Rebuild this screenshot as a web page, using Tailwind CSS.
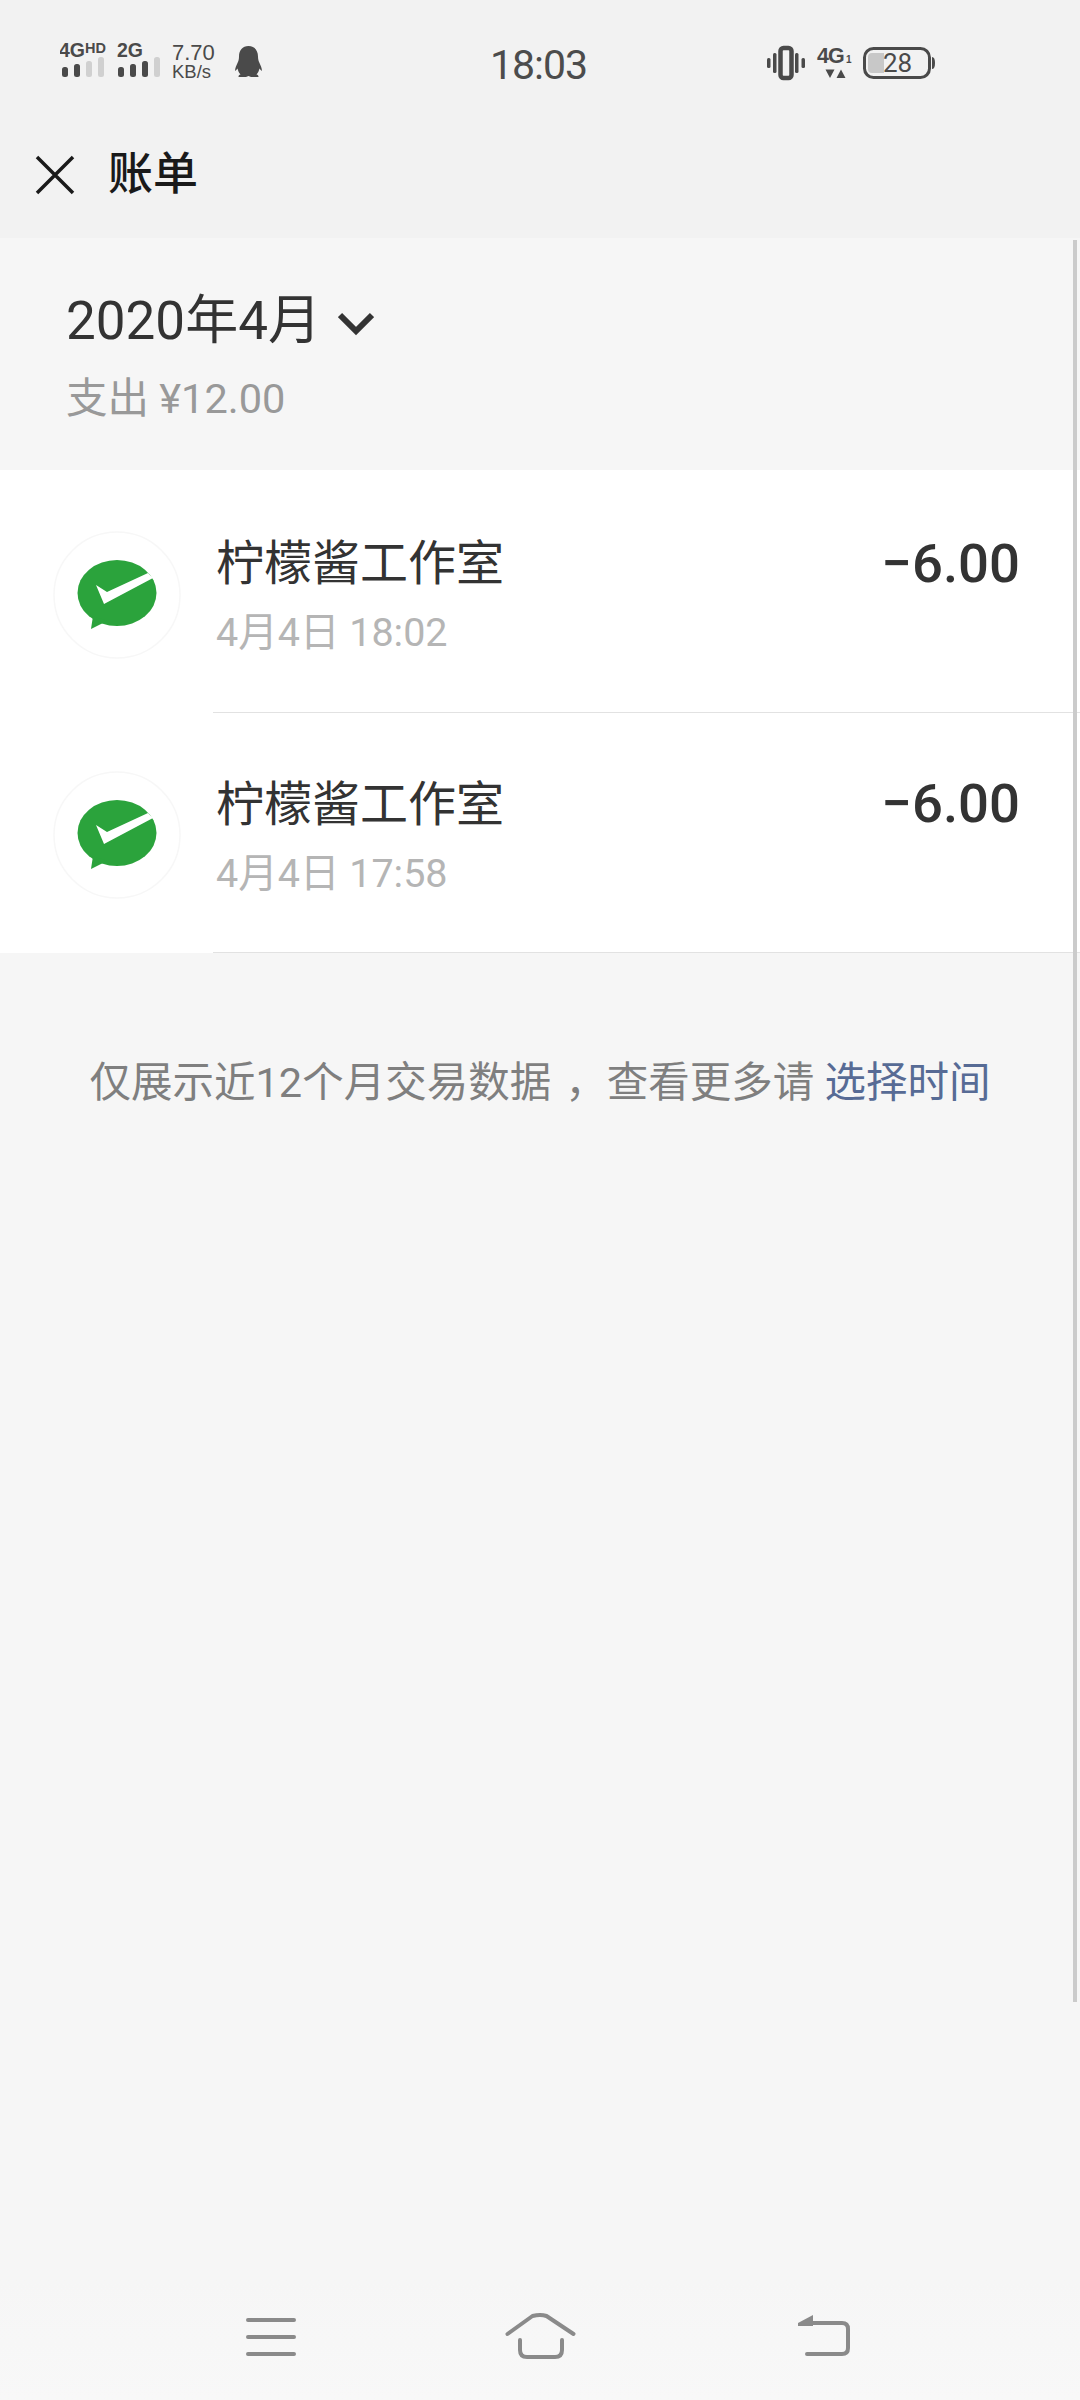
<!DOCTYPE html>
<html lang="zh-CN">
<head>
    <meta charset="UTF-8">
    <meta name="viewport" content="width=device-width, initial-scale=1.0">
    <title>账单</title>
    <script src="https://cdn.jsdelivr.net/npm/@tailwindcss/browser@4"></script>
</head>
<body class="relative flex flex-col w-[1080px] h-[2400px] overflow-hidden bg-[#f6f6f6] font-['Roboto','Noto_Sans_CJK_SC',sans-serif]">
    <!-- status bar + title -->
    <header class="h-[238px] bg-[#f2f2f2]">
        <div class="flex h-[128px]">
            <svg class="ml-[60px] shrink-0" width="205" height="128" viewBox="60 0 205 128">
                <g fill="#4a4a4a" font-family="Liberation Sans" font-weight="700">
                    <text x="59" y="57" font-size="19.500">4G</text>
                    <text x="85" y="52.500" font-size="14.500">HD</text>
                    <text x="117" y="57" font-size="19.500">2G</text>
                </g>
                <g fill="#4a4a4a">
                    <rect x="62" y="67" width="6" height="10" rx="2.500"/>
                    <rect x="74" y="64" width="6" height="13" rx="2.500"/>
                    <rect x="118" y="67" width="6" height="10" rx="2.500"/>
                    <rect x="130" y="64" width="6" height="13" rx="2.500"/>
                    <rect x="142" y="61" width="6" height="16" rx="2.500"/>
                </g>
                <g fill="#d0d0d0">
                    <rect x="86" y="61" width="6" height="16" rx="2.500"/>
                    <rect x="98" y="57" width="6" height="20" rx="2.500"/>
                    <rect x="154" y="57" width="6" height="20" rx="2.500"/>
                </g>
                <g fill="#4a4a4a" font-family="Liberation Sans">
                    <text x="172" y="60" font-size="22">7.70</text>
                    <text x="172" y="78" font-size="18.500">KB/s</text>
                </g>
                <path fill="#4a4a4a" d="M248.500 46c-6 0-9.500 4.500-9.500 10.500 0 2.500-.5 4.500-1.500 6.500-1.200 2.500-2.300 5-2.500 8 .9-.4 1.700-1.200 2.500-2.500.6 2.500 1.600 4.500 3 6-1.300.3-2 1-2 2.500h7.500l2.500-1 2.500 1h7.500c0-1.500-.7-2.200-2-2.500 1.400-1.500 2.400-3.500 3-6 .8 1.300 1.600 2.100 2.500 2.500-.2-3-1.300-5.500-2.500-8-1-2-1.500-4-1.500-6.500 0-6-3.500-10.500-9.500-10.500z"/>
            </svg>
            <div class="ml-[225px] w-[277px] shrink-0 pt-[40px] text-[41px] leading-[50px] tracking-[-1px] text-[#4c4c4c]">18:03</div>
            <svg class="shrink-0" width="170" height="128" viewBox="767 0 170 128">
                <g fill="#4a4a4a">
                    <rect x="767" y="58" width="3.500" height="10" rx="1.500"/>
                    <rect x="773" y="53" width="3.500" height="20" rx="1.500"/>
                    <rect x="795" y="53" width="3.500" height="20" rx="1.500"/>
                    <rect x="801.500" y="58" width="3.500" height="10" rx="1.500"/>
                </g>
                <rect x="780.500" y="48" width="11" height="30" rx="3" fill="none" stroke="#4a4a4a" stroke-width="4.500"/>
                <g fill="#4a4a4a" font-family="Liberation Sans" font-weight="700">
                    <text x="817" y="63" font-size="21.500" letter-spacing="-1">4G</text>
                    <text x="846" y="63" font-size="10">1</text>
                </g>
                <path fill="#4a4a4a" d="M825.500 69.500h9l-4.500 8.500zM836.500 78l4.500-8.500 4.500 8.500z"/>
                <rect x="864.500" y="48.500" width="65" height="29" rx="9" fill="none" stroke="#4a4a4a" stroke-width="3"/>
                <path fill="#c8c8c8" d="M872 53h12v20h-12a4 4 0 0 1-4-4v-12a4 4 0 0 1 4-4z"/>
                <path fill="#4a4a4a" d="M932 57c2 0 3 2 3 6s-1 6-3 6z"/>
                <text x="883" y="72" font-family="Roboto" font-size="26" fill="#4a4a4a">28</text>
            </svg>
        </div>
        <div class="flex items-center h-[90px] pt-[3px]">
            <svg class="ml-[34px] shrink-0" width="42" height="42" viewBox="0 0 42 42" fill="none" stroke="#1a1a1a" stroke-width="3.500">
                <path d="M3 3l36 36M39 3l-36 36"/>
            </svg>
            <div class="ml-[32px] text-[45px] leading-[60px] font-medium text-[#1a1a1a]">账单</div>
        </div>
    </header>

    <!-- month summary -->
    <section class="h-[232px] pl-[66px] pt-[53px]">
        <div class="flex items-center h-[60px]">
            <span class="text-[53px] leading-[60px] text-[#333333]">2020年4月</span>
            <svg class="ml-[17px] mt-[6px]" width="36" height="24" viewBox="0 0 36 24" fill="none" stroke="#333333" stroke-width="6">
                <path d="M2 3l16 16L34 3"/>
            </svg>
        </div>
        <div class="mt-[23px] text-[41.500px] leading-[50px] text-[#999999]">支出 ¥12.00</div>
    </section>

    <!-- bills -->
    <section class="bg-white pt-[3px]">
        <div class="flex h-[240px]">
            <div class="w-[213px] shrink-0 pl-[53px] pt-[58px]">
                <svg width="128" height="128" viewBox="53 531 128 128">
                    <circle cx="117" cy="595" r="63" fill="#ffffff" stroke="#f7f7f7" stroke-width="1.500"/>
                    <ellipse cx="117" cy="593" rx="39.500" ry="33" fill="#2ba33c"/>
                    <path fill="#2ba33c" d="M93 616l-2 13 16-8z"/>
                    <path fill="#ffffff" d="M96 585l11 7 41-19 5 5-49 26z"/>
                </svg>
            </div>
            <div class="flex flex-1 justify-between border-b border-[#e2e2e2] pr-[60px]">
                <div class="pl-[3px] pt-[61px]">
                    <div class="text-[48px] leading-[60px] text-[#333333]">柠檬酱工作室</div>
                    <div class="mt-[14px] text-[39.500px] leading-[50px] text-[#b5b5b5]">4月4日 18:02</div>
                </div>
                <div class="pt-[60px] text-[54.500px] leading-[60px] font-medium text-[#333333]">−6.00</div>
            </div>
        </div>
        <div class="flex h-[240px]">
            <div class="w-[213px] shrink-0 pl-[53px] pt-[58px]">
                <svg width="128" height="128" viewBox="53 531 128 128">
                    <circle cx="117" cy="595" r="63" fill="#ffffff" stroke="#f7f7f7" stroke-width="1.500"/>
                    <ellipse cx="117" cy="593" rx="39.500" ry="33" fill="#2ba33c"/>
                    <path fill="#2ba33c" d="M93 616l-2 13 16-8z"/>
                    <path fill="#ffffff" d="M96 585l11 7 41-19 5 5-49 26z"/>
                </svg>
            </div>
            <div class="flex flex-1 justify-between border-b border-[#e2e2e2] pr-[60px]">
                <div class="pl-[3px] pt-[62px]">
                    <div class="text-[48px] leading-[60px] text-[#333333]">柠檬酱工作室</div>
                    <div class="mt-[14px] text-[39.500px] leading-[50px] text-[#b5b5b5]">4月4日 17:58</div>
                </div>
                <div class="pt-[60px] text-[54.500px] leading-[60px] font-medium text-[#333333]">−6.00</div>
            </div>
        </div>
    </section>

    <p class="mt-[105px] text-center text-[41.500px] leading-[50px] text-[#7f7f7f]">仅展示近12个月交易数据<span class="ml-[14px]">，</span>查看更多请 <span class="text-[#576b95]">选择时间</span></p>

    <!-- nav bar -->
    <nav class="flex mt-auto h-[120px] bg-linear-to-b from-[#f6f6f6] to-[#f8f8f8]">
        <svg class="ml-[240px] shrink-0" width="60" height="120" viewBox="240 2280 60 120" fill="none" stroke="#8a8a8a" stroke-width="4" stroke-linecap="round">
            <path d="M248 2320h46M248 2337h46M248 2354h46"/>
        </svg>
        <svg class="ml-[200px] shrink-0" width="80" height="120" viewBox="500 2280 80 120" fill="none" stroke="#8a8a8a" stroke-width="4" stroke-linecap="round" stroke-linejoin="round">
            <path d="M507.500 2334l25-18q8-2 14 0l27 18"/>
            <path d="M520 2340v10q0 7 7 7h28q7 0 7-7v-10"/>
        </svg>
        <svg class="ml-[210px] shrink-0" width="65" height="120" viewBox="790 2280 65 120" fill="none" stroke="#8a8a8a" stroke-width="4" stroke-linecap="round">
            <path d="M808 2323h34q6 0 6 6v19q0 6-6 6h-35"/>
            <path fill="#8a8a8a" stroke="none" d="M798 2323l15-8v11h-15z"/>
        </svg>
    </nav>

    <!-- scrollbar -->
    <div class="absolute left-[1073px] top-[240px] w-[4px] h-[1762px] bg-[#cbcbcb]"></div>
</body>
</html>
